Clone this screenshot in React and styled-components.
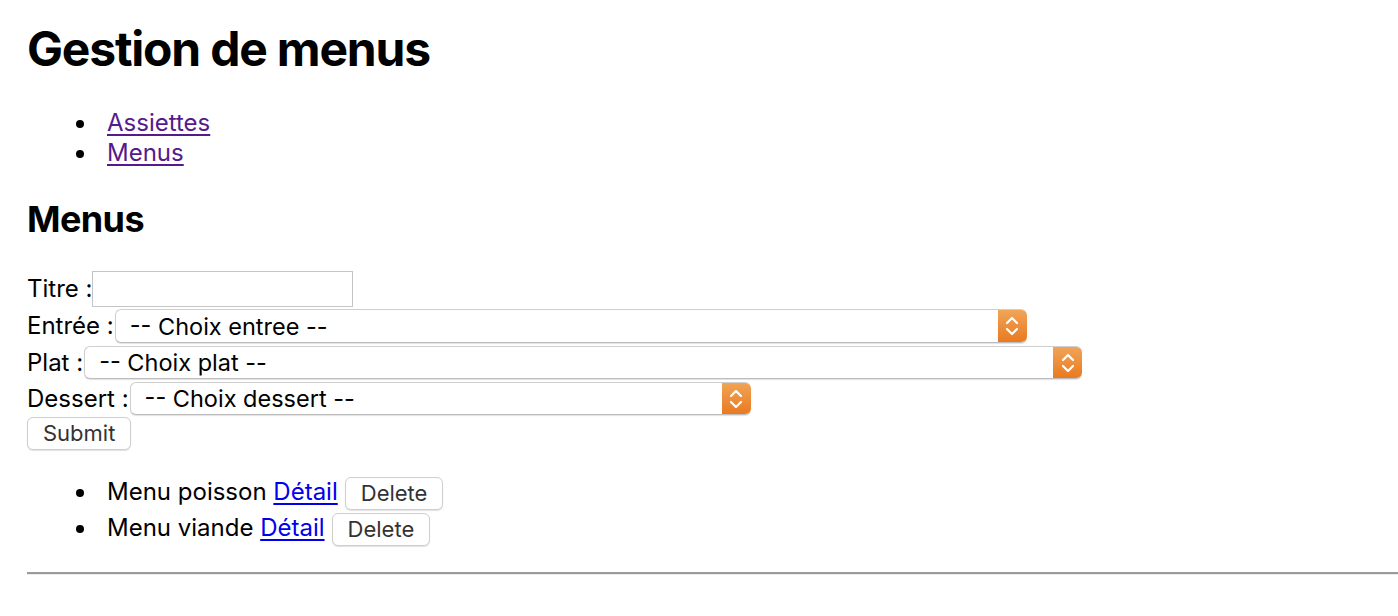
import React from "react";
import styled, { createGlobalStyle } from "styled-components";

const GlobalStyle = createGlobalStyle`
  body {
    margin: 0;
    background: #fff;
    color: #000;
    font-family: Inter, "Noto Sans", "Liberation Sans", sans-serif;
    font-size: 24px;
  }
`;

const Page = styled.div`
  padding: 0 0 0 27px;
`;

const Title = styled.h1`
  margin: 20px 0 0;
  font-size: 48px;
  line-height: 58px;
  font-weight: 700;
  letter-spacing: -1.2px;
`;

const SubTitle = styled.h2`
  margin: 29px 0 0;
  font-size: 36px;
  line-height: 44px;
  font-weight: 700;
  letter-spacing: -0.6px;
`;

const BulletList = styled.ul`
  margin: ${(p) => p.$top}px 0 0;
  padding-left: 80px;
  list-style: none;
  li::before {
    content: "";
    display: inline-block;
    box-sizing: border-box;
    width: 8px;
    height: 8px;
    min-width: 8px;
    border-radius: 50%;
    background: #000;
    margin-left: -31px;
    margin-right: 23px;
    vertical-align: middle;
  }
`;

const NavList = styled(BulletList)`
  li {
    line-height: 30px;
  }
`;

const NavLink = styled.a`
  color: #551a8b;
  text-decoration: underline;
  text-underline-offset: 3px;
`;

const Form = styled.form`
  margin-top: 30px;
`;

const FormRow = styled.div`
  display: flex;
  align-items: flex-start;
  height: ${(p) => p.$h}px;
`;

const Label = styled.label`
  line-height: ${(p) => p.$lh}px;
  margin-right: ${(p) => p.$gap}px;
  white-space: pre;
`;

const TextInput = styled.input`
  box-sizing: border-box;
  width: 261px;
  height: 36px;
  margin: 0;
  border: 1px solid #c4c4c4;
  border-radius: 0;
  font: inherit;
  padding: 0 6px;
  outline: none;
`;

const SelectBox = styled.div`
  box-sizing: border-box;
  display: inline-flex;
  width: ${(p) => p.$w}px;
  height: ${(p) => p.$h}px;
  border: 1px solid #cfcfcf;
  border-bottom-color: #bdbdbd;
  border-right: none;
  border-radius: 6px;
  background: #fff;
  box-shadow: 0 1px 1px rgba(0, 0, 0, 0.12);
  overflow: hidden;
`;

const NativeSelect = styled.select`
  flex: 1;
  appearance: none;
  border: none;
  outline: none;
  background: transparent;
  font-family: inherit;
  font-size: 23.5px;
  color: #000;
  padding: 0 0 0 14px;
  margin: 0;
`;

const Stepper = styled.span`
  width: 29px;
  display: flex;
  align-items: center;
  justify-content: center;
  margin-top: -1px;
  margin-bottom: -1px;
  background: linear-gradient(#f0a659, #e9781f);
  border-radius: 0 6px 6px 0;
`;

const Button = styled.button`
  box-sizing: border-box;
  height: 33px;
  padding: 0 15px;
  margin: 0;
  background: #fff;
  color: #333;
  border: 1px solid #cfcfcf;
  border-radius: 6px;
  box-shadow: 0 1px 1px rgba(0, 0, 0, 0.12);
  font-family: inherit;
  font-size: 22px;
  line-height: 31px;
`;

const MenuList = styled(BulletList)`
  li {
    height: 36px;
    line-height: 36px;
  }
  ${Button} {
    vertical-align: middle;
    margin-left: 7px;
  }
`;

const DetailLink = styled.a`
  color: #0000ee;
  text-decoration: underline;
  text-underline-offset: 3px;
`;

const Rule = styled.hr`
  margin: 26px 0 0;
  height: 0;
  border: none;
  border-top: 2px solid #9b9b9b;
  border-bottom: 1px solid #ececec;
`;

const Chevrons = () => (
  <svg width="14" height="22" viewBox="0 0 14 22" fill="none">
    <path d="M2 8 L7 3 L12 8" stroke="#fff" strokeWidth="2.2" strokeLinecap="round" strokeLinejoin="round" />
    <path d="M2 14 L7 19 L12 14" stroke="#fff" strokeWidth="2.2" strokeLinecap="round" strokeLinejoin="round" />
  </svg>
);

const Select = ({ width, height, placeholder }) => (
  <SelectBox $w={width} $h={height}>
    <NativeSelect defaultValue="">
      <option value="">{placeholder}</option>
    </NativeSelect>
    <Stepper>
      <Chevrons />
    </Stepper>
  </SelectBox>
);

const menus = [
  { id: 1, name: "Menu poisson" },
  { id: 2, name: "Menu viande" },
];

export default function App() {
  return (
    <Page>
      <GlobalStyle />
      <Title>Gestion de menus</Title>
      <NavList $top={30}>
        <li>
          <NavLink href="#assiettes">Assiettes</NavLink>
        </li>
        <li>
          <NavLink href="#menus">Menus</NavLink>
        </li>
      </NavList>
      <SubTitle>Menus</SubTitle>
      <Form onSubmit={(e) => e.preventDefault()}>
        <FormRow $h={38}>
          <Label $lh={36} $gap={0}>Titre :</Label>
          <TextInput type="text" />
        </FormRow>
        <FormRow $h={37}>
          <Label $lh={34} $gap={1}>Entrée :</Label>
          <Select width={912} height={34} placeholder="-- Choix entree --" />
        </FormRow>
        <FormRow $h={36}>
          <Label $lh={33} $gap={1}>Plat :</Label>
          <Select width={998} height={33} placeholder="-- Choix plat --" />
        </FormRow>
        <FormRow $h={35}>
          <Label $lh={33} $gap={1}>Dessert :</Label>
          <Select width={621} height={33} placeholder="-- Choix dessert --" />
        </FormRow>
        <Button type="submit">Submit</Button>
      </Form>
      <MenuList $top={24}>
        {menus.map((m) => (
          <li key={m.id}>
            {m.name} <DetailLink href={`#menu-${m.id}`}>Détail</DetailLink>
            <Button type="button">Delete</Button>
          </li>
        ))}
      </MenuList>
      <Rule />
    </Page>
  );
}
